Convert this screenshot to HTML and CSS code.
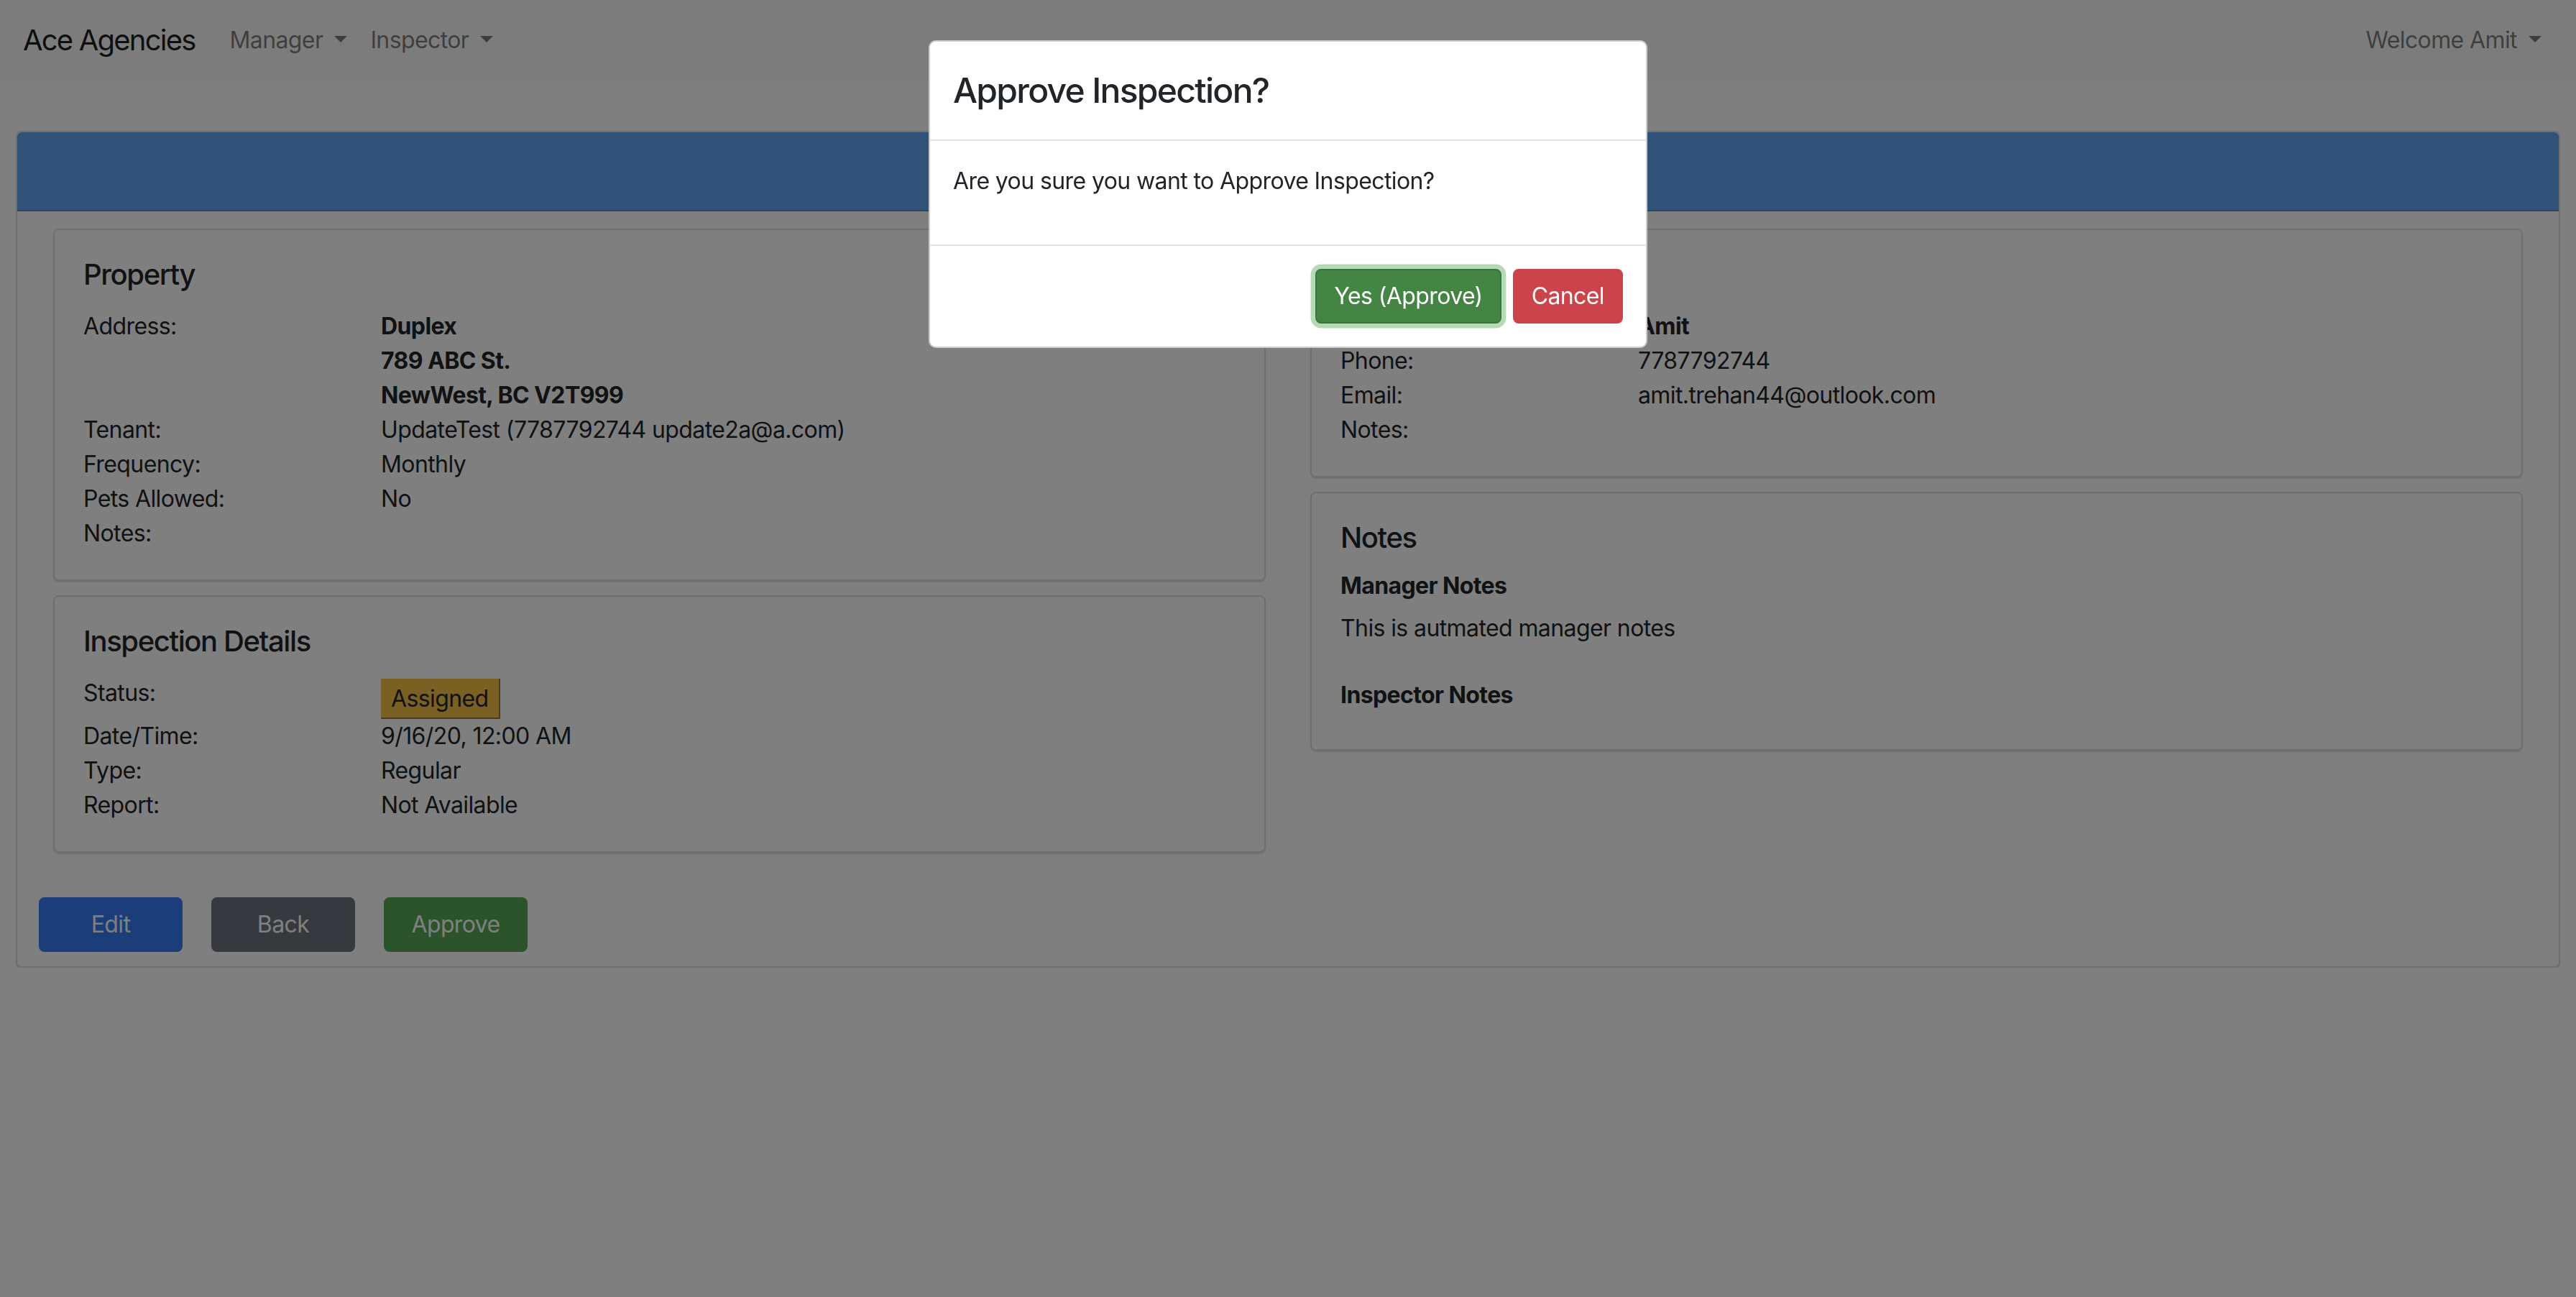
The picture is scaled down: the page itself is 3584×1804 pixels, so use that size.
FILE: index.html
```html
<!DOCTYPE html>
<html lang="en">
<head>
<meta charset="utf-8">
<title>Ace Agencies - Inspection</title>
<link rel="stylesheet" href="styles.css">
</head>
<body>
<nav class="navbar">
  <div class="nav-left">
    <a class="brand">Ace Agencies</a>
    <a class="nav-link dropdown">Manager</a>
    <a class="nav-link dropdown">Inspector</a>
  </div>
  <a class="nav-link dropdown">Welcome Amit</a>
</nav>

<main class="main-card">
  <div class="main-header"></div>
  <div class="main-body">
    <div class="cols">
      <div class="col">
        <section class="card">
          <h5 class="card-title">Property</h5>
          <div class="row"><div class="lbl">Address:</div><div class="val"><b>Duplex</b><br><b>789 ABC St.</b><br><b>NewWest, BC V2T999</b></div></div>
          <div class="row"><div class="lbl">Tenant:</div><div class="val">UpdateTest (7787792744 update2a@a.com)</div></div>
          <div class="row"><div class="lbl">Frequency:</div><div class="val">Monthly</div></div>
          <div class="row"><div class="lbl">Pets Allowed:</div><div class="val">No</div></div>
          <div class="row"><div class="lbl">Notes:</div><div class="val"></div></div>
        </section>
        <section class="card">
          <h5 class="card-title">Inspection Details</h5>
          <div class="row"><div class="lbl">Status:</div><div class="val"><span class="badge">Assigned</span></div></div>
          <div class="row"><div class="lbl">Date/Time:</div><div class="val">9/16/20, 12:00 AM</div></div>
          <div class="row"><div class="lbl">Type:</div><div class="val">Regular</div></div>
          <div class="row"><div class="lbl">Report:</div><div class="val">Not Available</div></div>
        </section>
      </div>
      <div class="col">
        <section class="card">
          <h5 class="card-title">Inspector</h5>
          <div class="row"><div class="lbl">Name:</div><div class="val"><b>Amit</b></div></div>
          <div class="row"><div class="lbl">Phone:</div><div class="val">7787792744</div></div>
          <div class="row"><div class="lbl">Email:</div><div class="val">amit.trehan44@outlook.com</div></div>
          <div class="row"><div class="lbl">Notes:</div><div class="val"></div></div>
        </section>
        <section class="card">
          <h5 class="card-title">Notes</h5>
          <h6 class="sub">Manager Notes</h6>
          <p class="note">This is autmated manager notes</p>
          <h6 class="sub">Inspector Notes</h6>
        </section>
      </div>
    </div>
    <div class="actions">
      <button class="btn btn-edit">Edit</button>
      <button class="btn btn-back">Back</button>
      <button class="btn btn-approve">Approve</button>
    </div>
  </div>
</main>

<div class="backdrop"></div>

<div class="modal">
  <div class="modal-header">
    <h4 class="modal-title">Approve Inspection?</h4>
  </div>
  <div class="modal-body">
    <p>Are you sure you want to Approve Inspection?</p>
  </div>
  <div class="modal-footer">
    <button class="btn btn-yes">Yes (Approve)</button>
    <button class="btn btn-cancel">Cancel</button>
  </div>
</div>
</body>
</html>
```

FILE: styles.css
```css
html {
  zoom: 2;
}

* {
  box-sizing: border-box;
}

body {
  margin: 0;
  font-family: Inter, "Liberation Sans", Arial, sans-serif;
  font-size: 16px;
  line-height: 24px;
  letter-spacing: -0.3px;
  color: #212529;
  background: #ffffff;
}

/* Navbar */
.navbar {
  height: 56px;
  padding: 8px 16px;
  display: flex;
  align-items: center;
  justify-content: space-between;
  background: #f8f9fa;
}

.nav-left {
  display: flex;
  align-items: center;
}

.brand {
  font-size: 20px;
  line-height: 30px;
  color: rgba(0, 0, 0, 0.9);
  margin-right: 16px;
  letter-spacing: -0.9px;
}

.nav-link {
  padding: 8px;
  color: rgba(0, 0, 0, 0.5);
}

.dropdown::after {
  content: "";
  display: inline-block;
  margin-left: 8px;
  vertical-align: 0.255em;
  border-top: 0.3em solid;
  border-right: 0.3em solid transparent;
  border-left: 0.3em solid transparent;
  border-bottom: 0;
}

/* Main card */
.main-card {
  margin: 35px 11px 0;
  border: 1px solid rgba(0, 0, 0, 0.125);
  border-radius: 4px;
  box-shadow: 0 1px 1px rgba(0, 0, 0, 0.12);
}

.main-header {
  height: 55px;
  background: #64a4f4;
  border-bottom: 1px solid rgba(0, 0, 0, 0.125);
  border-radius: 3px 3px 0 0;
}

.main-body {
  padding: 12px 15px 10px;
}

.cols {
  display: grid;
  grid-template-columns: 1fr 1fr;
  column-gap: 31px;
  padding: 0 10px;
  align-items: start;
}

.col {
  display: flex;
  flex-direction: column;
  gap: 10px;
}

.card {
  border: 1px solid rgba(0, 0, 0, 0.125);
  border-radius: 4px;
  padding: 20px;
  box-shadow: 0 1px 1px rgba(0, 0, 0, 0.12);
}

.card-title {
  margin: -1px 0 12px;
  font-size: 20px;
  font-weight: 500;
  line-height: 24px;
  letter-spacing: -0.7px;
}

.row {
  display: grid;
  grid-template-columns: 207px 1fr;
}

.val b {
  font-weight: 700;
}

.badge {
  display: inline-block;
  margin-top: 2px;
  padding: 2px 7px 1px;
  line-height: 24px;
  background: #f4c044;
  border-right: 1px solid #9c7c2c;
  border-bottom: 1px solid #9c7c2c;
}

.sub {
  margin: 0 0 8px;
  font-size: 16px;
  font-weight: 700;
  line-height: 19px;
}

.note {
  margin: 0 0 25px;
}

/* Buttons */
.btn {
  font-family: inherit;
  font-size: 16px;
  line-height: 24px;
  letter-spacing: -0.3px;
  padding: 6px 12px;
  border: 1px solid transparent;
  border-radius: 4px;
  color: #ffffff;
  cursor: pointer;
}

.actions {
  display: flex;
  gap: 20px;
  margin-top: 31px;
}

.actions .btn {
  width: 100px;
}

.btn-edit {
  background: #367cf6;
  border-color: #367cf6;
}

.btn-back {
  background: #6c757d;
  border-color: #6c757d;
}

.btn-approve {
  background: #56a856;
  border-color: #56a856;
}

/* Backdrop + modal */
.backdrop {
  position: fixed;
  inset: 0;
  background: rgba(0, 0, 0, 0.5);
}

.modal {
  position: fixed;
  top: 28px;
  left: 50%;
  width: 500px;
  margin-left: -250px;
  background: #ffffff;
  border: 1px solid rgba(0, 0, 0, 0.2);
  border-radius: 5px;
}

.modal-header {
  padding: 16px;
  border-bottom: 1px solid #dee2e6;
}

.modal-title {
  margin: 0;
  font-size: 24px;
  font-weight: 500;
  line-height: 36px;
  letter-spacing: -0.85px;
}

.modal-body {
  padding: 16px;
}

.modal-body p {
  margin: 0 0 16px;
}

.modal-footer {
  display: flex;
  justify-content: flex-end;
  align-items: center;
  padding: 12px;
  border-top: 1px solid #dee2e6;
}

.modal-footer .btn {
  margin: 4px;
}

.btn-yes {
  background: #448544;
  border-color: #3a763a;
  box-shadow: 0 0 0 3.2px #b4dbb5;
}

.btn-cancel {
  background: #cb444b;
  border-color: #cb444b;
}
```
